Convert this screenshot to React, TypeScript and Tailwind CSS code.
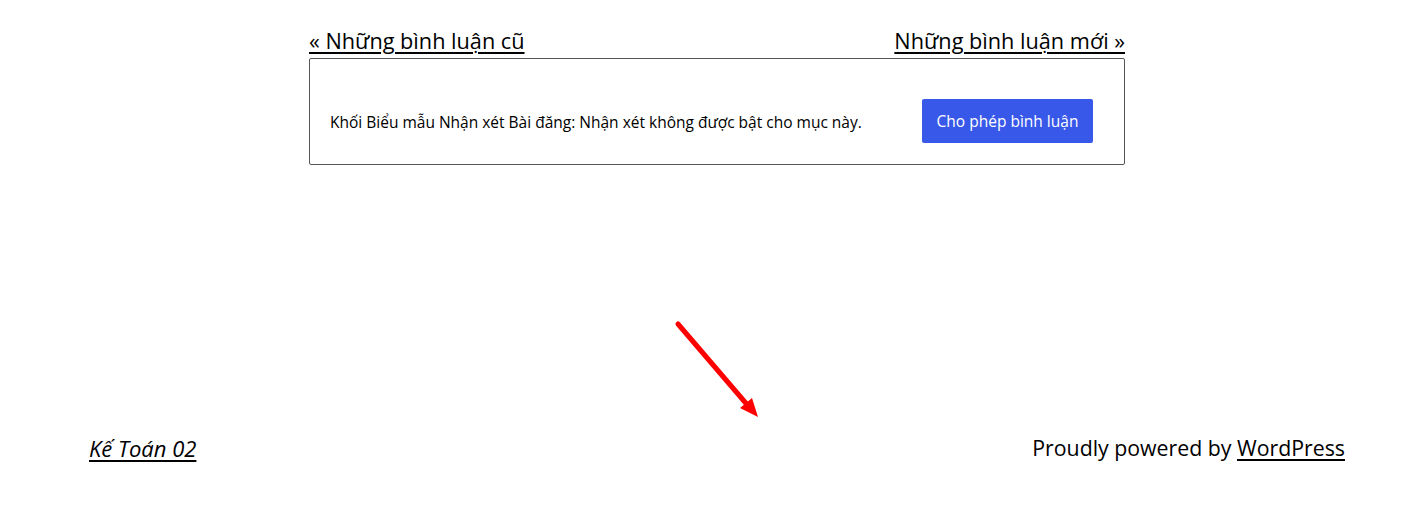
export default function App() {
  return (
    <div className="relative w-[1412px] h-[520px] bg-white text-black overflow-hidden font-['Open_Sans',sans-serif]">
      <div className="ml-[309px] w-[816px] pt-[26px]">
        <div className="flex justify-between text-[21.7px] leading-[30px]">
          <a href="#" className="underline underline-offset-[3px] decoration-[2px]">« Những bình luận cũ</a>
          <a href="#" className="underline underline-offset-[3px] decoration-[2px]">Những bình luận mới »</a>
        </div>
        <div className="mt-[2px] h-[107px] border border-[#555] rounded-[2px] flex items-center justify-between pl-[20px] pr-[31px] pt-[19px]">
          <p className="text-[15.5px] pt-[3px]">Khối Biểu mẫu Nhận xét Bài đăng: Nhận xét không được bật cho mục này.</p>
          <button className="h-[44px] w-[171px] bg-[#3858e9] text-white text-[15.5px] pt-[2px] rounded-[2px]">Cho phép bình luận</button>
        </div>
      </div>

      <div className="mt-[268px] flex justify-between pl-[89px] pr-[67px] leading-[30px]">
        <a href="#" className="text-[22px] italic underline underline-offset-[3px] decoration-[2px]">Kế Toán 02</a>
        <p className="text-[21.3px]">
          Proudly powered by <a href="#" className="underline underline-offset-[3px] decoration-[2px]">WordPress</a>
        </p>
      </div>

      <svg className="absolute left-[670px] top-[316px]" width="100" height="110" viewBox="0 0 100 110">
        <line x1="8" y1="8" x2="80" y2="92" stroke="#ff0000" strokeWidth="5" strokeLinecap="round" />
        <polygon points="88,101 70,92 82,82" fill="#ff0000" />
      </svg>
    </div>
  );
}
